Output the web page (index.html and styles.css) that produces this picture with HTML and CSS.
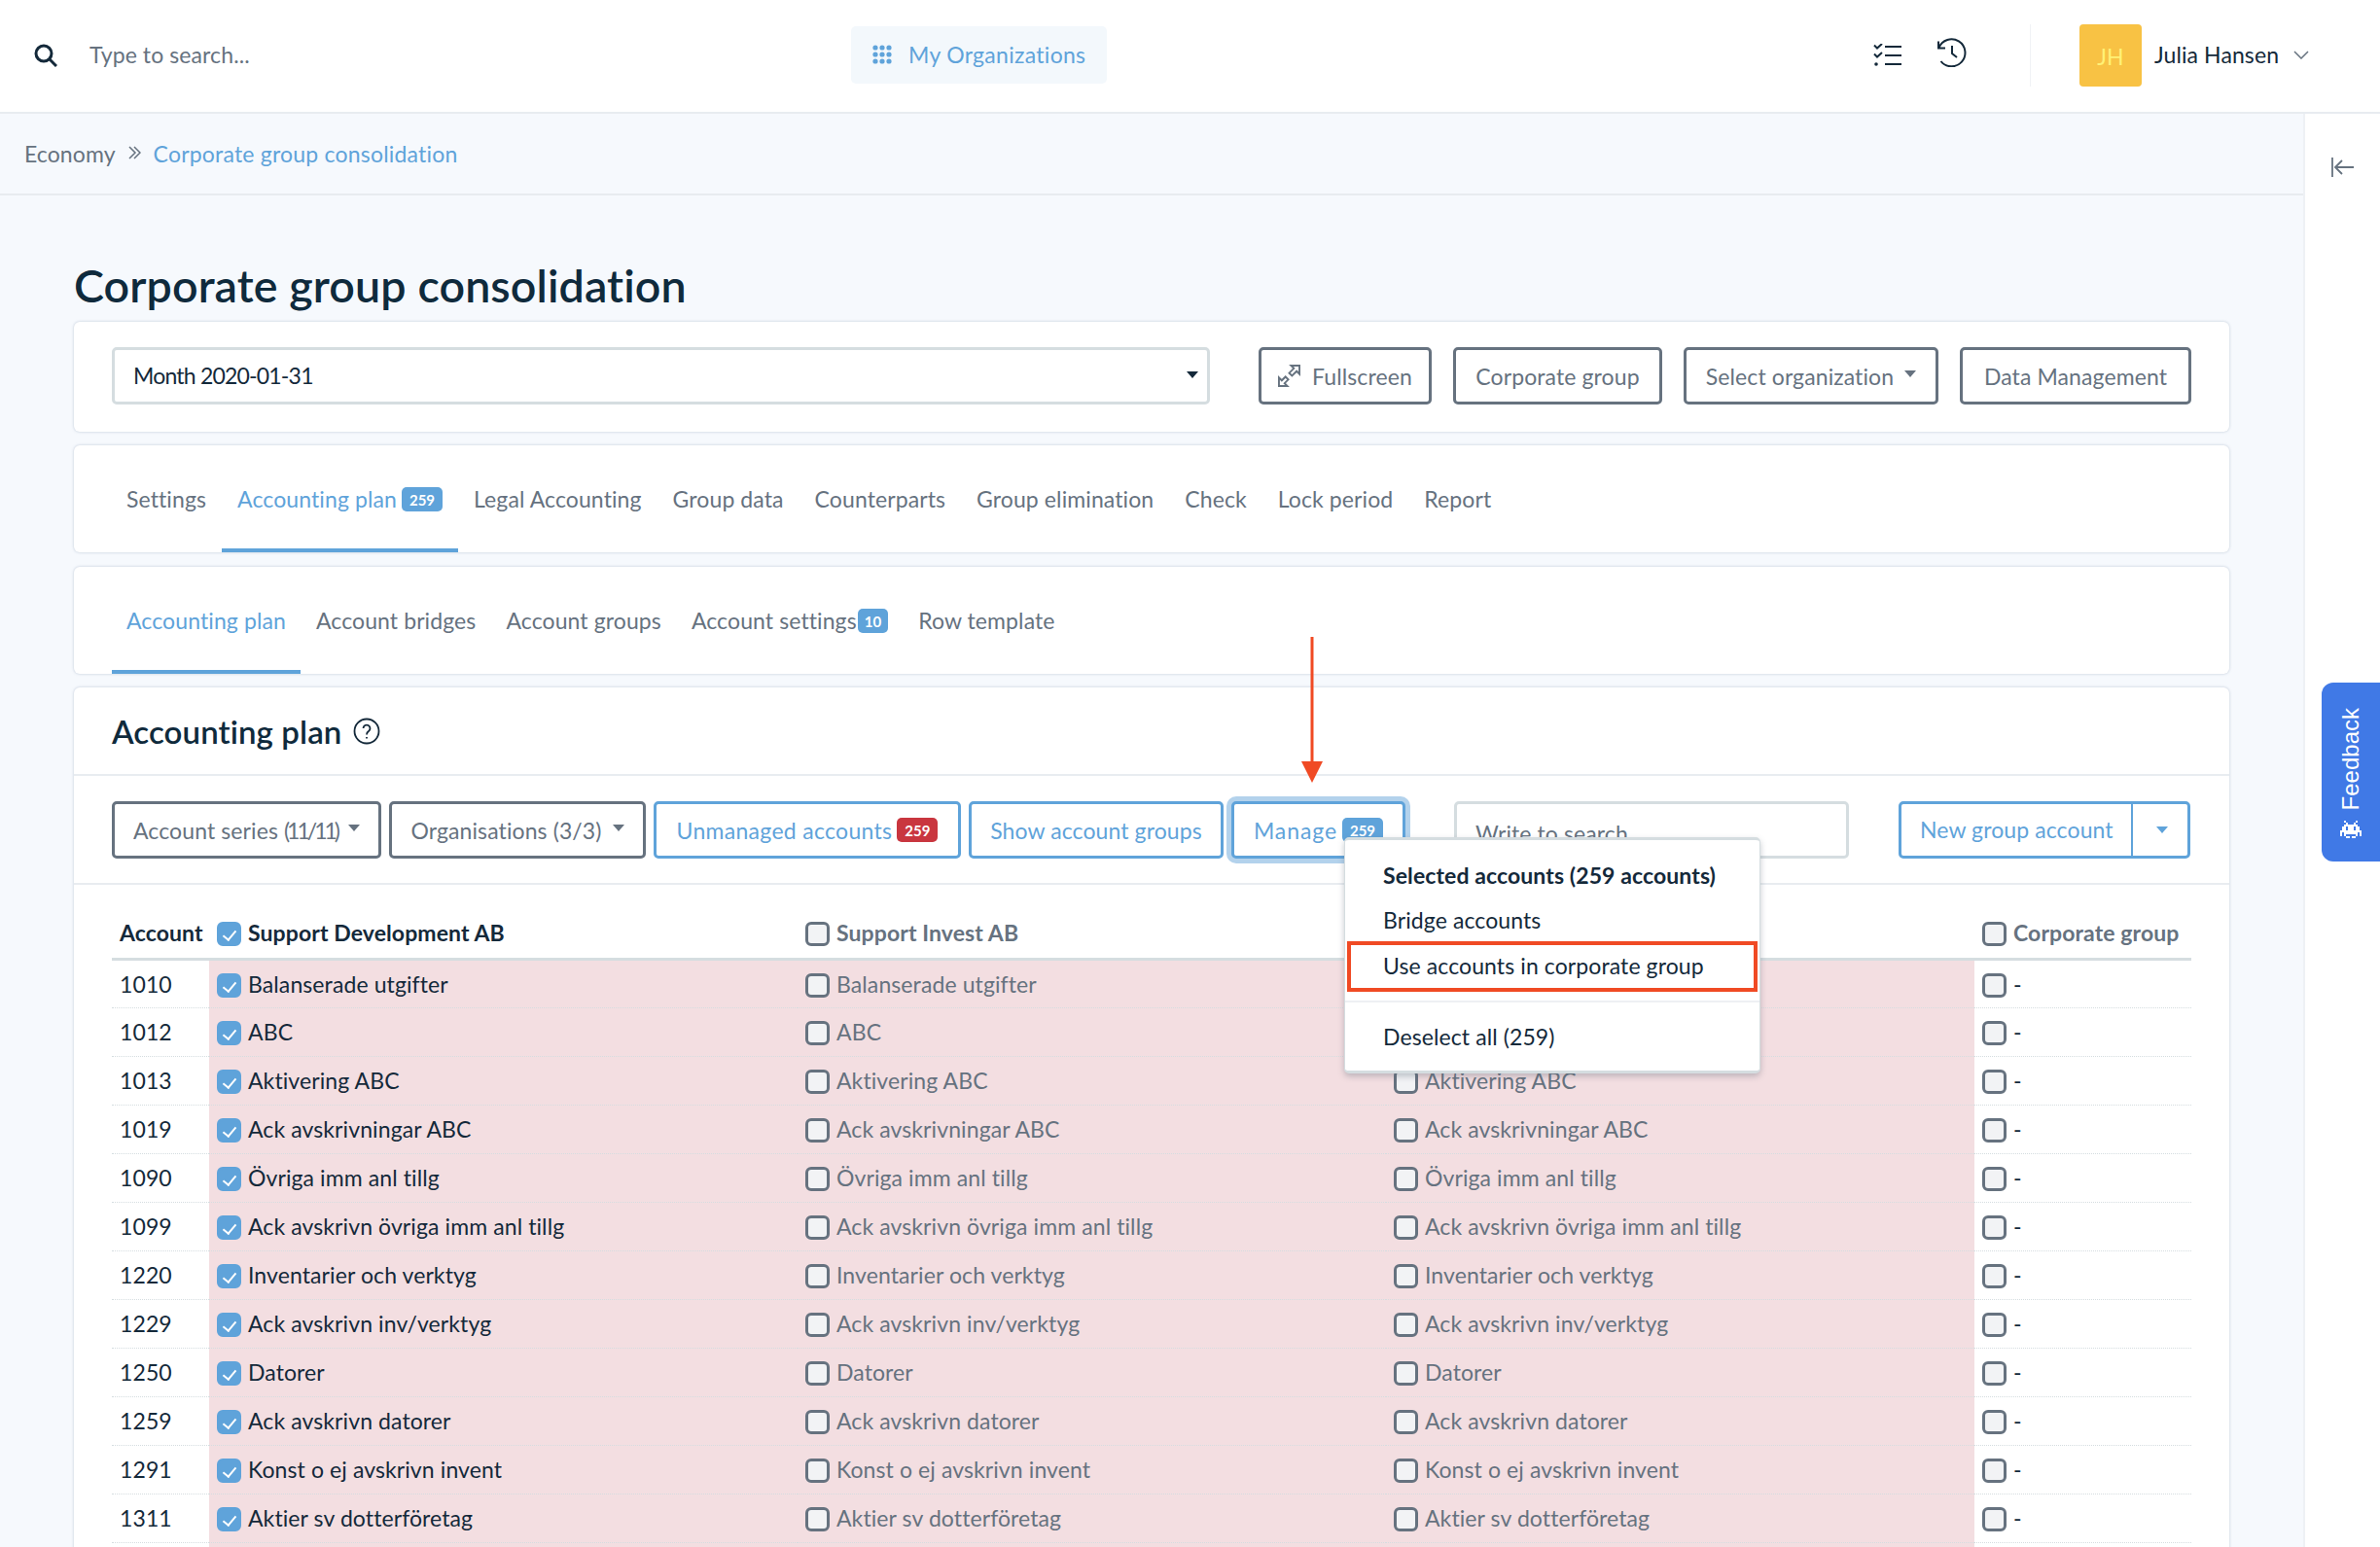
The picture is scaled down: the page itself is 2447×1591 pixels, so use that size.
FILE: index.html
```html
<!DOCTYPE html>
<html lang="en">
<head>
  <meta charset="UTF-8">
  <title>Corporate group consolidation</title>
  <link rel="stylesheet" href="styles.css">
</head>
<body>
  <!-- Top bar -->
  <header class="topbar">
    <svg class="search-icon" viewBox="0 0 24 24"><circle cx="10" cy="10" r="8"/><path d="M16 16l7 7"/></svg>
    <span class="search-text">Type to search...</span>
    <a class="org-btn">
      <svg viewBox="0 0 20 20"><g><circle cx="3" cy="3" r="2.6"/><circle cx="10" cy="3" r="2.6"/><circle cx="17" cy="3" r="2.6"/><circle cx="3" cy="10" r="2.6"/><circle cx="10" cy="10" r="2.6"/><circle cx="17" cy="10" r="2.6"/><circle cx="3" cy="17" r="2.6"/><circle cx="10" cy="17" r="2.6"/><circle cx="17" cy="17" r="2.6"/></g></svg>
      My Organizations
    </a>
    <svg class="list-icon" viewBox="0 0 30 24"><path d="M1 1.500l3 3 5-4.500M1 10.500l3 3 5-4.500M12 3h17M12 12h17M12 21h17"/><circle class="dot" cx="3" cy="21" r="1.800"/></svg>
    <svg class="history-icon" viewBox="0 0 30 30"><path d="M1.500 10A14 14 0 1 1 3.500 24M1 3.500V10.500h7M15 8v8l5 4"/></svg>
    <span class="top-divider"></span>
    <span class="avatar">JH</span>
    <span class="user-name">Julia Hansen</span>
    <svg class="user-chevron" viewBox="0 0 16 9"><path d="M1 1l7 7 7-7"/></svg>
  </header>

  <div class="layout">
    <main class="content">
      <nav class="breadcrumb">
        <span>Economy</span>
        <svg class="crumb-sep" viewBox="0 0 13 14"><path d="M1 1l6 6-6 6M6 1l6 6-6 6"/></svg>
        <a>Corporate group consolidation</a>
      </nav>

      <div class="page">
        <h1>Corporate group consolidation</h1>

        <section class="card filter-card">
          <div class="period-select">Month 2020-01-31<i class="caret dark"></i></div>
          <button class="btn w-full">
            <svg class="full-icon" viewBox="0 0 24 24"><path d="M14 1h9v9l-3-3-5 5-3-3 5-5zM1 14v9h9l-3-3 4-4-3-3-4 4z"/></svg>
            Fullscreen
          </button>
          <button class="btn w-corp">Corporate group</button>
          <button class="btn w-select">Select organization<i class="caret"></i></button>
          <button class="btn w-data">Data Management</button>
        </section>

        <section class="card tabs tabs-main">
          <a>Settings</a>
          <a class="active">Accounting plan <b class="badge">259</b></a>
          <a>Legal Accounting</a>
          <a>Group data</a>
          <a>Counterparts</a>
          <a>Group elimination</a>
          <a>Check</a>
          <a>Lock period</a>
          <a>Report</a>
        </section>

        <section class="card tabs">
          <a class="active">Accounting plan</a>
          <a>Account bridges</a>
          <a>Account groups</a>
          <a>Account settings <b class="badge small">10</b></a>
          <a>Row template</a>
        </section>

        <section class="card plan-card">
          <div class="plan-head">
            <h2>Accounting plan</h2>
            <svg class="help-icon" viewBox="0 0 28 28"><circle cx="14" cy="14" r="12.500"/><path d="M10.500 11a3.500 3.500 0 1 1 5.500 3c-1.500 1-2 1.500-2 3.500M14 20v1.500"/></svg>
          </div>

          <div class="plan-tools">
            <button class="btn w-series"><span>Account series <span class="tight-nums">(11/11)</span></span><i class="caret"></i></button>
            <button class="btn w-orgs">Organisations (3/3)<i class="caret"></i></button>
            <button class="btn blue w-unmanaged">Unmanaged accounts <b class="badge red">259</b></button>
            <button class="btn blue w-show">Show account groups</button>
            <button class="btn blue focused">Manage <b class="badge">259</b></button>
            <div class="tool-search">Write to search</div>
            <div class="split-btn">
              <span class="split-main">New group account</span>
              <span class="split-toggle"><i class="caret blue-caret"></i></span>
            </div>

            <div class="dropdown">
              <div class="dropdown-item head">Selected accounts (259 accounts)</div>
              <div class="dropdown-item">Bridge accounts</div>
              <div class="dropdown-item marked">Use accounts in corporate group</div>
              <hr>
              <div class="dropdown-item">Deselect all (259)</div>
            </div>
          </div>

          <table class="plan-table">
            <colgroup><col class="c-acc"><col class="c-org"><col class="c-org"><col class="c-org"><col></colgroup>
            <thead>
              <tr>
                <th>Account</th>
                <th><i class="box on"></i>Support Development AB</th>
                <th class="muted"><i class="box"></i>Support Invest AB</th>
                <th></th>
                <th class="muted"><i class="box"></i>Corporate group</th>
              </tr>
            </thead>
            <tbody>
              <tr><td>1010</td><td><i class="box on"></i>Balanserade utgifter</td><td><i class="box"></i>Balanserade utgifter</td><td></td><td><i class="box"></i>-</td></tr>
              <tr><td>1012</td><td><i class="box on"></i>ABC</td><td><i class="box"></i>ABC</td><td></td><td><i class="box"></i>-</td></tr>
              <tr><td>1013</td><td><i class="box on"></i>Aktivering ABC</td><td><i class="box"></i>Aktivering ABC</td><td><i class="box"></i>Aktivering ABC</td><td><i class="box"></i>-</td></tr>
              <tr><td>1019</td><td><i class="box on"></i>Ack avskrivningar ABC</td><td><i class="box"></i>Ack avskrivningar ABC</td><td><i class="box"></i>Ack avskrivningar ABC</td><td><i class="box"></i>-</td></tr>
              <tr><td>1090</td><td><i class="box on"></i>Övriga imm anl tillg</td><td><i class="box"></i>Övriga imm anl tillg</td><td><i class="box"></i>Övriga imm anl tillg</td><td><i class="box"></i>-</td></tr>
              <tr><td>1099</td><td><i class="box on"></i>Ack avskrivn övriga imm anl tillg</td><td><i class="box"></i>Ack avskrivn övriga imm anl tillg</td><td><i class="box"></i>Ack avskrivn övriga imm anl tillg</td><td><i class="box"></i>-</td></tr>
              <tr><td>1220</td><td><i class="box on"></i>Inventarier och verktyg</td><td><i class="box"></i>Inventarier och verktyg</td><td><i class="box"></i>Inventarier och verktyg</td><td><i class="box"></i>-</td></tr>
              <tr><td>1229</td><td><i class="box on"></i>Ack avskrivn inv/verktyg</td><td><i class="box"></i>Ack avskrivn inv/verktyg</td><td><i class="box"></i>Ack avskrivn inv/verktyg</td><td><i class="box"></i>-</td></tr>
              <tr><td>1250</td><td><i class="box on"></i>Datorer</td><td><i class="box"></i>Datorer</td><td><i class="box"></i>Datorer</td><td><i class="box"></i>-</td></tr>
              <tr><td>1259</td><td><i class="box on"></i>Ack avskrivn datorer</td><td><i class="box"></i>Ack avskrivn datorer</td><td><i class="box"></i>Ack avskrivn datorer</td><td><i class="box"></i>-</td></tr>
              <tr><td>1291</td><td><i class="box on"></i>Konst o ej avskrivn invent</td><td><i class="box"></i>Konst o ej avskrivn invent</td><td><i class="box"></i>Konst o ej avskrivn invent</td><td><i class="box"></i>-</td></tr>
              <tr><td>1311</td><td><i class="box on"></i>Aktier sv dotterföretag</td><td><i class="box"></i>Aktier sv dotterföretag</td><td><i class="box"></i>Aktier sv dotterföretag</td><td><i class="box"></i>-</td></tr>
              <tr><td></td><td></td><td></td><td></td><td></td></tr>
            </tbody>
          </table>
        </section>
      </div>
    </main>

    <aside class="side-rail">
      <svg viewBox="0 0 24 20"><path d="M1 0v20M23 10H5M11 3l-7 7 7 7"/></svg>
    </aside>
  </div>

  <!-- Annotation arrow on the screenshot -->
  <svg class="annotation-arrow" viewBox="0 0 24 150"><path class="shaft" d="M12 0v130"/><path class="head" d="M1 128h22l-11 22z"/></svg>

  <div class="feedback">
    <span>Feedback</span>
    <svg viewBox="0 0 11 9"><path d="M2 0h1v1h1v1h3V1h1V0h1v1H8v1h1v1h1v2h1v3h-1V6H9v2H8v1H6V8h2V7H3v1h2v1H3V8H2V6H1v2H0V5h1V3h1V2h1V1H2zM3 3v2h1V3zM7 3v2h1V3z"/></svg>
  </div>
</body>
</html>
```

FILE: styles.css
```css
* {
  box-sizing: border-box;
}
html, body {
  height: 1591px;
}
body {
  margin: 0;
  overflow: hidden;
  position: relative;
  font-family: Lato, "Noto Sans", sans-serif;
  font-size: 23px;
  letter-spacing: 0.1px;
  color: #14293a;
  background: #f6f9fd;
}
svg {
  fill: none;
  stroke: #14293a;
  flex: none;
}

/* Top bar */
.topbar {
  display: flex;
  align-items: center;
  height: 117px;
  padding: 0 0 2px 35px;
  background: #fff;
  border-bottom: 2px solid #e8ecf0;
}
.search-icon {
  width: 24px;
  height: 24px;
  stroke-width: 3;
}
.search-text {
  margin-left: 33px;
  width: 783px;
  padding-bottom: 2px;
  color: #66727f;
}
.org-btn {
  display: flex;
  align-items: center;
  gap: 17px;
  width: 263px;
  height: 59px;
  padding: 0 0 2px 22px;
  border-radius: 5px;
  background: #f3f8fc;
  color: #5fa3da;
  letter-spacing: 0.3px;
}
.org-btn svg {
  width: 20px;
  height: 20px;
}
.org-btn circle {
  fill: #5fa3da;
  stroke: none;
}
.list-icon {
  width: 30px;
  height: 24px;
  margin-left: 788px;
  stroke-width: 2;
}
.list-icon .dot {
  fill: #14293a;
  stroke: none;
}
.history-icon {
  width: 30px;
  height: 30px;
  margin: -6px 0 0 36px;
  stroke-width: 2;
}
.top-divider {
  width: 1px;
  height: 64px;
  margin-left: 65px;
  background: #f0f2f5;
}
.avatar {
  width: 64px;
  height: 64px;
  margin-left: 50px;
  border-radius: 4px;
  background: #f8c244;
  color: #fff176;
  line-height: 66px;
  text-align: center;
}
.user-name {
  margin-left: 13px;
  width: 143px;
  padding-bottom: 2px;
}
.user-chevron {
  width: 16px;
  height: 9px;
  stroke: #66727f;
  stroke-width: 1.500;
}

/* Page frame */
.layout {
  display: flex;
}
.content {
  flex: 1;
  min-width: 0;
}
.side-rail {
  width: 79px;
  height: 1474px;
  padding: 42px 0 0 27px;
  background: #fff;
  border-left: 2px solid #eef1f5;
}
.side-rail svg {
  width: 24px;
  height: 20px;
  stroke: #66727f;
  stroke-width: 1.800;
}
.breadcrumb {
  display: flex;
  align-items: center;
  height: 84px;
  padding-left: 25px;
  border-bottom: 2px solid #e8ecf0;
  color: #66727f;
}
.crumb-sep {
  width: 13px;
  height: 14px;
  margin: -3px 13px 0;
  stroke: #66727f;
  stroke-width: 1.500;
}
.breadcrumb a {
  color: #5fa3da;
  letter-spacing: 0.2px;
}
.page {
  padding: 65px 76px 0;
}
h1 {
  margin: 0 0 11px;
  font-size: 46.600px;
  line-height: 54px;
  font-weight: 600;
  color: #0f2a3c;
}

/* Cards */
.card {
  background: #fff;
  border-radius: 6px;
  box-shadow: 0 0 3px rgba(120, 140, 165, 0.45);
  margin-bottom: 14px;
}
.filter-card {
  display: flex;
  gap: 22px;
  height: 113px;
  padding: 26px 39px 0;
}
.period-select {
  position: relative;
  flex: 1;
  margin-right: 28px;
  height: 59px;
  padding-left: 19px;
  line-height: 53px;
  letter-spacing: -0.8px;
  border: 3px solid #d5dde0;
  border-radius: 5px;
}
.btn {
  display: inline-flex;
  align-items: center;
  justify-content: center;
  gap: 5px;
  height: 59px;
  padding: 0;
  font: inherit;
  letter-spacing: inherit;
  color: #66727f;
  background: #fff;
  border: 3px solid #66727f;
  border-radius: 5px;
  white-space: nowrap;
}
.w-full { width: 178px; }
.w-corp { width: 215px; }
.w-select { width: 262px; }
.w-data { width: 238px; }
.w-series { width: 277px; }
.w-orgs { width: 264px; }
.w-unmanaged { width: 316px; letter-spacing: 0.3px; }
.w-show { width: 262px; }
.btn.blue {
  color: #5fa3da;
  border-color: #5fa3da;
}
.btn.focused {
  width: 179px;
  letter-spacing: 0.9px;
  box-shadow: 0 0 0 5px #b3d2ec;
}
.tight-nums {
  letter-spacing: -3px;
}
.full-icon {
  width: 23px;
  height: 23px;
  margin-right: 7px;
  stroke: #66727f;
  stroke-width: 2;
}
.caret {
  display: inline-block;
  width: 0;
  height: 0;
  margin-left: 6px;
  margin-top: -4px;
  border-top: 7px solid #66727f;
  border-left: 6px solid transparent;
  border-right: 6px solid transparent;
}
.caret.dark {
  position: absolute;
  right: 9px;
  top: 26px;
  border-top-color: #14293a;
}
.caret.blue-caret {
  margin: 0 0 0 3px;
  border-top-color: #5fa3da;
}
.badge {
  display: inline-block;
  height: 25px;
  padding: 0 8px;
  font-size: 15px;
  line-height: 26px;
  font-weight: 700;
  letter-spacing: 0;
  color: #fff;
  background: #5fa3da;
  border-radius: 5px;
}
.badge.small {
  padding: 0 7px;
  margin-left: -4px;
}
.badge.red {
  background: #c9363f;
}

/* Tabs */
.tabs {
  display: flex;
  height: 110px;
  padding-left: 39px;
  color: #66727f;
}
.tabs a {
  display: flex;
  align-items: center;
  gap: 5px;
  height: 110px;
  padding: 0 15.500px;
}
.tabs a:first-child {
  padding-left: 15px;
}
.tabs a.active {
  color: #5fa3da;
  box-shadow: inset 0 -4px 0 #5fa3da;
}
.tabs-main {
  margin-bottom: 15px;
}
.tabs-main a {
  padding: 0 16px;
}

/* Accounting plan */
.plan-card {
  margin: 0;
}
.plan-head {
  display: flex;
  align-items: center;
  gap: 12px;
  height: 91px;
  padding-left: 39px;
  border-bottom: 2px solid #e8ecf0;
}
h2 {
  margin: 0;
  font-size: 33px;
  font-weight: 600;
  color: #0f2a3c;
}
.help-icon {
  width: 28px;
  height: 28px;
  stroke-width: 1.800;
}
.plan-tools {
  position: relative;
  display: flex;
  gap: 8px;
  height: 112px;
  padding: 26px 39px 0;
  border-bottom: 2px solid #e8ecf0;
}
.tool-search {
  width: 406px;
  height: 59px;
  margin-left: 42px;
  padding-left: 19px;
  line-height: 60px;
  color: #66727f;
  border: 3px solid #d5dde0;
  border-radius: 5px;
}
.split-btn {
  display: flex;
  height: 59px;
  margin-left: 43px;
  color: #5fa3da;
  border: 3px solid #5fa3da;
  border-radius: 5px;
}
.split-main {
  width: 238px;
  padding-left: 19px;
  line-height: 53px;
  border-right: 2px solid #5fa3da;
}
.split-toggle {
  display: flex;
  align-items: center;
  justify-content: center;
  width: 56px;
}
.dropdown {
  position: absolute;
  left: 1306px;
  top: 63px;
  width: 428px;
  height: 243px;
  padding: 15px 0 0;
  background: #fff;
  border: 3px solid #d5dde0;
  border-width: 3px 1px;
  border-radius: 5px;
  box-shadow: 0 3px 6px rgba(90, 100, 115, 0.35);
  z-index: 5;
}
.dropdown-item {
  height: 46px;
  padding-left: 39px;
  line-height: 43px;
}
.dropdown-item.head {
  font-weight: 700;
}
.dropdown-item.marked {
  height: 52px;
  margin: -3px 2px;
  padding-left: 33px;
  line-height: 42px;
  border: 4px solid #f04a24;
}
.dropdown hr {
  margin: 12px 0 14px;
  border: 0;
  border-top: 2px solid #eef0f3;
}

/* Table */
.plan-table {
  width: 2138px;
  margin-left: 39px;
  table-layout: fixed;
  border-collapse: collapse;
}
.c-acc {
  width: 100px;
}
.c-org {
  width: 605px;
}
.plan-table th {
  height: 76px;
  padding: 24px 0 0 8px;
  text-align: left;
  font-weight: 700;
  border-bottom: 3px solid #d5dde0;
}
.plan-table th.muted {
  color: #66727f;
}
.plan-table td {
  height: 50px;
  padding: 0 0 0 8px;
  color: #66727f;
  border-bottom: 1px dotted #d5dde0;
  white-space: nowrap;
}
.plan-table td:nth-child(2),
.plan-table td:nth-child(3),
.plan-table td:nth-child(4) {
  background: #f3dee1;
}
.plan-table td:nth-child(1),
.plan-table td:nth-child(2),
.plan-table td:nth-child(5) {
  color: #14293a;
}
.box {
  display: inline-block;
  position: relative;
  width: 25px;
  height: 25px;
  margin-right: 7px;
  vertical-align: -5px;
  background: #f2f3f5;
  border: 3px solid #66727f;
  border-radius: 6px;
}
.box.on {
  background: #5fa3da;
  border-color: #5fa3da;
}
.box.on::after {
  content: '';
  position: absolute;
  left: 6px;
  top: 3px;
  width: 6px;
  height: 11px;
  border: solid #fff;
  border-width: 0 2.500px 2.500px 0;
  transform: rotate(40deg);
}

/* Floating stuff */
.annotation-arrow {
  position: absolute;
  left: 1337px;
  top: 655px;
  width: 24px;
  height: 150px;
}
.annotation-arrow .shaft {
  stroke: #f04a24;
  stroke-width: 3;
}
.annotation-arrow .head {
  fill: #f04a24;
  stroke: none;
}
.feedback {
  position: absolute;
  right: 0;
  top: 702px;
  display: flex;
  flex-direction: column;
  align-items: center;
  gap: 11px;
  width: 60px;
  height: 184px;
  padding-top: 26px;
  background: #4079e6;
  border-radius: 12px 0 0 12px;
  color: #fff;
}
.feedback span {
  writing-mode: vertical-rl;
  transform: rotate(180deg);
  font-family: "Liberation Sans", sans-serif;
  font-size: 24px;
  letter-spacing: 0;
}
.feedback svg {
  width: 22px;
  height: 18px;
  fill: #fff;
  fill-rule: evenodd;
  stroke: none;
}
```
